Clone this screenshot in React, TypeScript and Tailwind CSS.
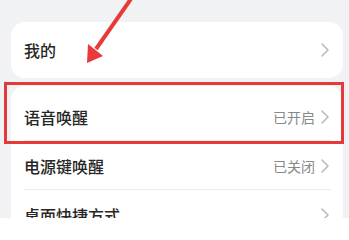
const font = { fontFamily: '"Noto Sans CJK SC", "Noto Sans", sans-serif' }

function Chevron() {
  return (
    <svg width="8" height="14" viewBox="0 0 8 14" fill="none" className="shrink-0">
      <path d="M1 1 L7 7 L1 13" stroke="#b8b8b8" strokeWidth="1.5" strokeLinecap="round" strokeLinejoin="round" />
    </svg>
  )
}

function Row({ label, value, divider }: { label: string; value?: string; divider?: boolean }) {
  return (
    <div className="relative flex h-[49px] items-center justify-between pl-[13px] pr-[14px]">
      <span className="text-[16px] font-medium leading-none text-[#262626]">{label}</span>
      <div className="flex items-center gap-[6px]">
        {value && <span className="text-[14px] leading-none text-[#888]">{value}</span>}
        <Chevron />
      </div>
      {divider && <div className="absolute bottom-0 left-[13px] right-[12px] h-px bg-[#ececec]" />}
    </div>
  )
}

export default function App() {
  return (
    <div className="relative h-[218px] w-[349px] overflow-hidden bg-[#f1f2f4]" style={font}>
      <div className="ml-[11px] mr-[6px] pt-[22px]">
        <div className="flex h-[56px] items-center justify-between rounded-[14px] bg-white pl-[13px] pr-[14px]">
          <span className="text-[16px] font-medium leading-none text-[#262626]">我的</span>
          <Chevron />
        </div>

        <div className="mt-[8px] rounded-[14px] bg-white pt-[6px]">
          <Row label="语音唤醒" value="已开启" divider />
          <Row label="电源键唤醒" value="已关闭" divider />
          <Row label="桌面快捷方式" />
        </div>
      </div>

      {/* highlight box */}
      <div className="absolute left-[4px] top-[82px] h-[62px] w-[340px] border-[3px] border-[#e53a3c]" />

      {/* arrow */}
      <svg className="absolute left-0 top-0" width="349" height="218" viewBox="0 0 349 218">
        <line x1="133" y1="-4" x2="96" y2="49" stroke="#e8393b" strokeWidth="4" />
        <polygon points="87,63 88,44 103,56" fill="#e8393b" />
      </svg>
    </div>
  )
}
